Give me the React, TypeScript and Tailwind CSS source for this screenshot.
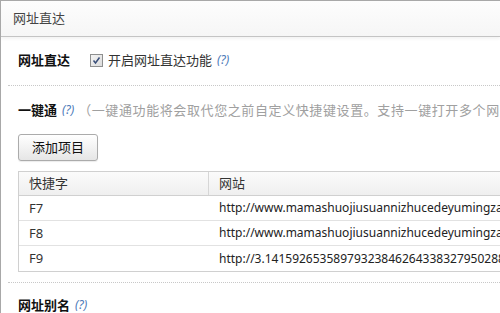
import React from "react";

const font = { fontFamily: '"Noto Sans", "Noto Sans CJK SC", sans-serif' };

function Help() {
  return <span className="text-[#4a78b8] italic text-[12px] ml-[5px]">(?)</span>;
}

function Separator() {
  return <div className="-ml-[10px] border-t border-dotted border-[#c8c8c8]" />;
}

const rows = [
  ["F7", "http://www.mamashuojiusuannizhucedeyumingza"],
  ["F8", "http://www.mamashuojiusuannizhucedeyumingza"],
  ["F9", "http://3.14159265358979323846264338327950288"],
];

export default function App() {
  return (
    <div
      className="w-[500px] h-[313px] overflow-hidden bg-white border-l border-t border-[#a8a8a8] text-[13px] text-[#333] leading-none"
      style={font}
    >
      <div className="h-[36px] flex items-center pl-[12px] bg-gradient-to-b from-[#fdfdfd] to-[#f6f6f6] border-b border-[#c4c4c4] shadow-[0_2px_3px_rgba(0,0,0,0.05)] text-[#444]">
        网址直达
      </div>
      <div className="pl-[17px]">
        <div className="h-[24px] mt-[11px] mb-[13px] flex items-center">
          <span className="w-[72px] shrink-0 font-bold text-[#111]">网址直达</span>
          <span className="w-[13px] h-[13px] shrink-0 border border-[#8e8f8f] bg-gradient-to-br from-[#f4f4f4] to-[#dcdcdc] flex items-center justify-center">
            <svg width="9" height="9" viewBox="0 0 9 9">
              <path d="M1.5 4.5 L3.5 7 L7.5 1.5" stroke="#3a4f7a" strokeWidth="1.5" fill="none" />
            </svg>
          </span>
          <span className="ml-[5px]">开启网址直达功能</span>
          <Help />
        </div>
        <Separator />
        <div className="h-[24px] mt-[12px] flex items-center whitespace-nowrap">
          <span className="font-bold text-[#111]">一键通</span>
          <Help />
          <span className="ml-[4px] text-[#a0a0a0] tracking-[0.6px]">（一键通功能将会取代您之前自定义快捷键设置。支持一键打开多个网</span>
        </div>
        <button className="mt-[12px] w-[80px] h-[27px] border border-[#ababab] rounded-[3px] bg-gradient-to-b from-[#ffffff] to-[#e6e6e6] shadow-[0_1px_1px_rgba(0,0,0,0.08)] text-[13px] text-[#111] flex items-center justify-center">
          添加项目
        </button>
        <div className="mt-[10px] w-[560px] border border-[#d0d0d0]">
          <div className="h-[24px] flex bg-gradient-to-b from-[#fbfbfb] to-[#efefef] border-b border-[#d0d0d0]">
            <div className="w-[190px] shrink-0 border-r border-[#d6d6d6] pl-[10px] flex items-center">快捷字</div>
            <div className="pl-[10px] flex items-center">网站</div>
          </div>
          {rows.map(([k, u], i) => (
            <div key={k} className={`h-[25px] flex whitespace-nowrap ${i < rows.length - 1 ? "border-b border-[#e2e2e2]" : ""}`}>
              <div className="w-[190px] shrink-0 pl-[10px] flex items-center">{k}</div>
              <div className="pl-[10px] flex items-center text-[12px] text-[#222]">{u}</div>
            </div>
          ))}
        </div>
        <div className="mt-[10px]">
          <Separator />
        </div>
        <div className="h-[24px] mt-[10px] flex items-center">
          <span className="font-bold text-[#111]">网址别名</span>
          <Help />
        </div>
      </div>
    </div>
  );
}
